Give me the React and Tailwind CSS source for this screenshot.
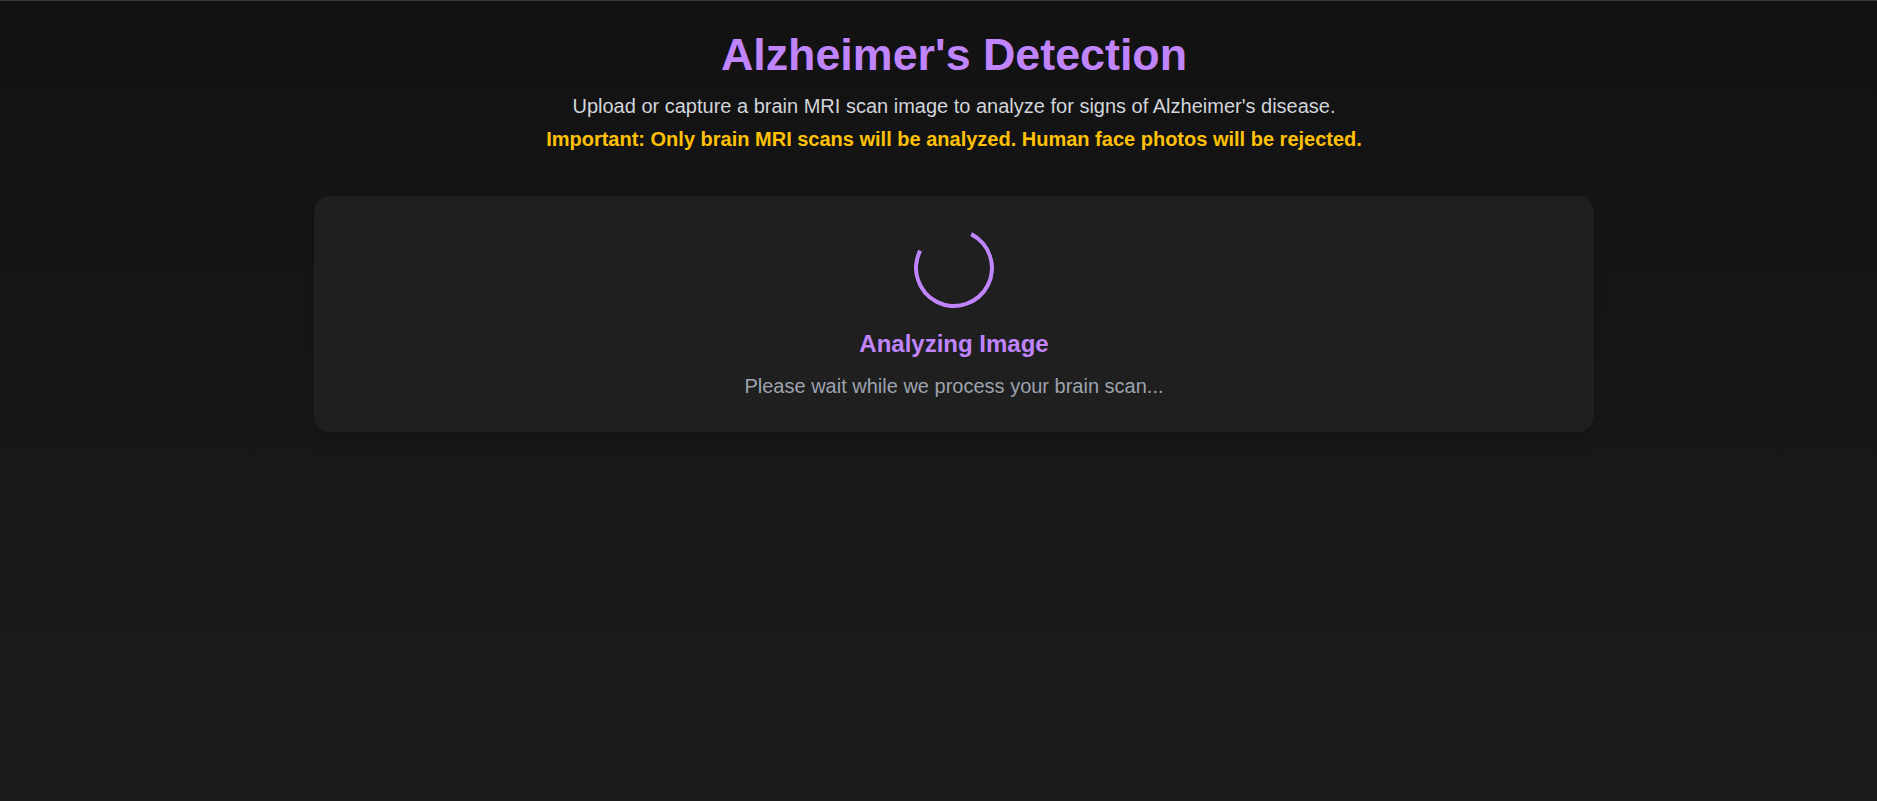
const Spinner = () => (
    <div className="w-20 h-20 rounded-full border-4 border-[#c084fc] border-t-transparent rotate-[-18deg]" />
);

export default function App() {
    return (
        <div className="min-h-[801px] bg-gradient-to-b from-[#121212] to-[#1c1c1c] border-t border-[#3a3a3a] pl-[31px] pt-[27px] font-['Liberation_Sans',Arial,sans-serif]">
            <div className="mx-auto max-w-7xl">
                {/* Header */}
                <header className="text-center">
                    <h1 className="text-[44.8px] leading-[1.2] font-bold text-[#c084fc] mb-[10px]">
                        Alzheimer's Detection
                    </h1>
                    <p className="text-xl leading-7 text-[#d1d5db] mb-[5px]">
                        Upload or capture a brain MRI scan image to analyze for signs of Alzheimer's disease.
                    </p>
                    <p className="text-xl leading-7 font-bold text-[#ffc107]">
                        Important: Only brain MRI scans will be analyzed. Human face photos will be rejected.
                    </p>
                </header>

                {/* Loading card */}
                <section className="mt-[43px] bg-[#1f1f1f] rounded-2xl shadow-lg p-8 flex flex-col items-center text-center">
                    <Spinner />
                    <h2 className="mt-5 text-2xl font-bold text-[#c084fc]">Analyzing Image</h2>
                    <p className="mt-3 text-xl leading-7 text-[#9ca3af]">
                        Please wait while we process your brain scan...
                    </p>
                </section>
            </div>
        </div>
    );
}
